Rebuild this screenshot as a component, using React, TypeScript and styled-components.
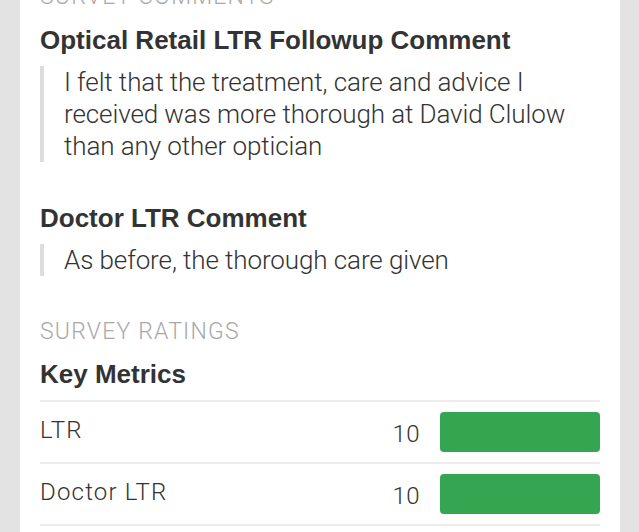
import styled, { createGlobalStyle } from "styled-components"

const GlobalStyle = createGlobalStyle`
    html, body {
        margin: 0;
        padding: 0;
        background-color: #e3e3e3;
        height: 100%;
        overflow: hidden;
    }
    body {
        font-family: "Liberation Sans", Arial, sans-serif;
        color: #333333;
    }
`

type Comment = { title: string; text: string }
type Metric = { name: string; score: number; max: number }

const comments: Comment[] = [
    {
        title: "Optical Retail LTR Followup Comment",
        text: "I felt that the treatment, care and advice I received was more thorough at David Clulow than any other optician",
    },
    {
        title: "Doctor LTR Comment",
        text: "As before, the thorough care given",
    },
]

const metrics: Metric[] = [
    { name: "LTR", score: 10, max: 10 },
    { name: "Doctor LTR", score: 10, max: 10 },
]

const App = () => {
    return (
        <>
            <GlobalStyle />
            <Card>
                <SectionLabel $top={-17}>Survey Comments</SectionLabel>
                {comments.map((c, i) => (
                    <CommentBlock key={c.title} $first={i === 0}>
                        <Heading>{c.title}</Heading>
                        <Quote>{c.text}</Quote>
                    </CommentBlock>
                ))}
                <SectionLabel $top={42}>Survey Ratings</SectionLabel>
                <MetricsTitle>Key Metrics</MetricsTitle>
                {metrics.map((m) => (
                    <MetricRow key={m.name}>
                        <MetricName>{m.name}</MetricName>
                        <MetricValue>{m.score}</MetricValue>
                        <BarTrack>
                            <BarFill style={{ width: `${(m.score / m.max) * 100}%` }} />
                        </BarTrack>
                    </MetricRow>
                ))}
            </Card>
        </>
    )
}

const Card = styled.div`
    margin: 0 19px 0 20px;
    background-color: #ffffff;
    padding: 0 20px;
    height: 532px;
    box-sizing: border-box;
    overflow: hidden;
`

const SectionLabel = styled.div<{ $top: number }>`
    margin-top: ${(p) => p.$top}px;
    font-family: Roboto, "Liberation Sans", sans-serif;
    font-size: 23px;
    line-height: 28px;
    font-weight: 300;
    letter-spacing: 1.2px;
    text-transform: uppercase;
    color: #a9a9a9;
`

const CommentBlock = styled.div<{ $first: boolean }>`
    margin-top: ${(p) => (p.$first ? 13 : 40)}px;
`

const Heading = styled.div`
    font-size: 26px;
    line-height: 32px;
    font-weight: 700;
    color: #333333;
`

const Quote = styled.blockquote`
    margin: 10px 0 0 0;
    padding: 0 0 0 20px;
    border-left: 4px solid #dddddd;
    font-family: Roboto, "Liberation Sans", sans-serif;
    font-size: 26px;
    line-height: 32px;
    font-weight: 300;
    letter-spacing: -0.1px;
    color: #333333;
`

const MetricsTitle = styled.div`
    margin-top: 12px;
    padding-bottom: 10px;
    border-bottom: 2px solid #ececec;
    font-size: 26px;
    line-height: 32px;
    font-weight: 700;
`

const MetricRow = styled.div`
    display: flex;
    align-items: center;
    height: 60px;
    border-bottom: 2px solid #ececec;
    font-family: Roboto, "Liberation Sans", sans-serif;
    font-size: 24px;
    line-height: 30px;
    font-weight: 300;
`

const MetricName = styled.div`
    flex: 1;
    margin-top: -4px;
    letter-spacing: 1.2px;
`

const MetricValue = styled.div`
    margin-top: 4px;
    letter-spacing: 0.5px;
`

const BarTrack = styled.div`
    width: 160px;
    height: 40px;
    margin-left: 20px;
`

const BarFill = styled.div`
    height: 100%;
    background-color: #35a552;
    border-radius: 4px;
`

export default App
